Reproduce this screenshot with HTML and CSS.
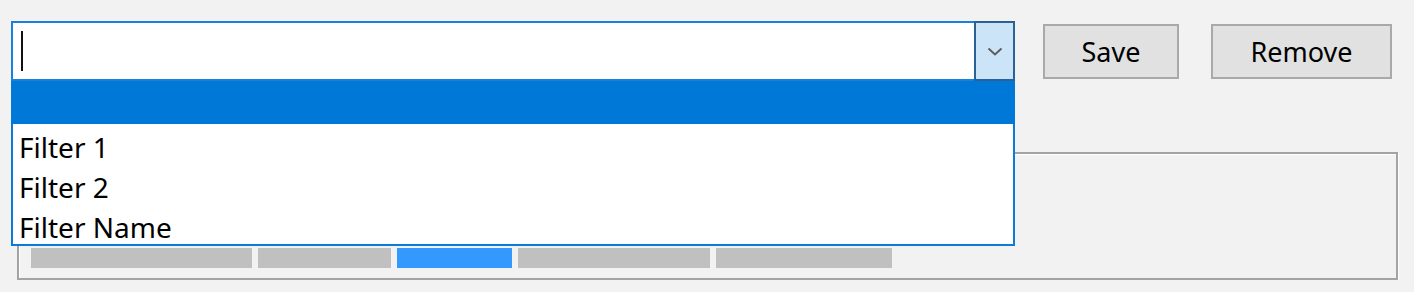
FILE: index.html
```html
<!DOCTYPE html>
<html lang="en">
<head>
    <meta charset="UTF-8">
    <title>Filters</title>

    <link rel="stylesheet" href="styles.css">

</head>
<body>

<div class="toolbar">
    <div class="combo">
        <div class="combo-input">
            <span class="caret"></span>
        </div>
        <div class="combo-btn">
            <svg width="16" height="9" viewBox="0 0 16 9">
                <path d="M1.5 1.5 L8 7.5 L14.5 1.5" fill="none" stroke="#5a5a5a" stroke-width="1.8"/>
            </svg>
        </div>
        <div class="dropdown">
            <div class="selected"></div>
            <div class="items">
                <div class="item">Filter 1</div>
                <div class="item">Filter 2</div>
                <div class="item">Filter Name</div>
            </div>
        </div>
    </div>
    <button class="btn save">Save</button>
    <button class="btn remove">Remove</button>
</div>

<div class="group">
    <div class="tabs">
        <div class="tab t1"></div>
        <div class="tab t2"></div>
        <div class="tab t3 active"></div>
        <div class="tab t4"></div>
        <div class="tab t5"></div>
    </div>
</div>

</body>
</html>
```

FILE: styles.css
```css
body {
    margin: 0;
    background-color: #f2f2f2;
    font-family: "Noto Sans", "Open Sans", sans-serif;
    color: #000;
}

.toolbar {
    display: flex;
    align-items: flex-start;
    padding: 21px 0 0 11px;
}

.combo {
    position: relative;
    display: flex;
    width: 1004px;
    height: 60px;
}

.combo-input {
    flex: 1;
    display: flex;
    align-items: center;
    padding-left: 8px;
    background-color: #fff;
    border: 2px solid #1a80dc;
    border-right: none;
}

.caret {
    display: inline-block;
    width: 2px;
    height: 40px;
    background-color: #111;
}

.combo-btn {
    width: 37px;
    display: flex;
    align-items: center;
    justify-content: center;
    background-color: #cce4f7;
    border: 2px solid #2a6296;
}

.dropdown {
    position: absolute;
    top: 60px;
    left: 0;
    width: 1004px;
    z-index: 2;
}

.selected {
    height: 43px;
    background-color: #0078d7;
}

.items {
    background-color: #fff;
    border: 2px solid #0a7bd8;
    border-top: none;
    height: 120px;
}

.item {
    height: 40px;
    line-height: 40px;
    padding-left: 6px;
    font-size: 28px;
    position: relative;
    top: 3px;
}

.btn {
    margin-top: 3px;
    height: 55px;
    background-color: #e1e1e1;
    border: 2px solid #a9a9a9;
    font-family: "Noto Sans", "Open Sans", sans-serif;
    font-size: 27px;
    color: #000;
    padding: 0;
}

.save {
    width: 136px;
    margin-left: 28px;
}

.remove {
    width: 181px;
    margin-left: 32px;
}

.group {
    margin: 71px 16px 0 17px;
    height: 124px;
    border: 2px solid #a3a3a3;
    box-shadow: 1px 1px 0 #fff, inset 1px 1px 0 #fff;
}

.tabs {
    display: flex;
    gap: 6px;
    padding: 94px 0 0 12px;
}

.tab {
    height: 20px;
    background-color: #c0c0c0;
}

.t1 { width: 221px; }
.t2 { width: 133px; }
.t3 { width: 115px; }
.t4 { width: 192px; }
.t5 { width: 176px; }

.tab.active {
    background-color: #3399ff;
}
```
